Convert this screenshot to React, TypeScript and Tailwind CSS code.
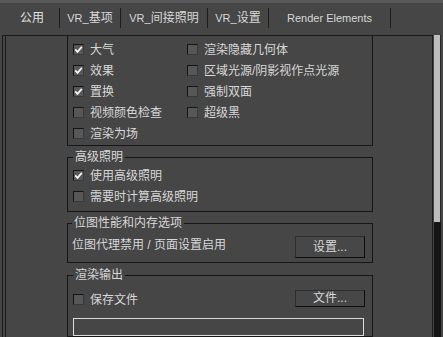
import type { ReactNode } from "react";

const Check = ({ on }: { on?: boolean }) => (
  <span className="flex h-[11px] w-[11px] shrink-0 items-center justify-center border border-t-[#141414] border-l-[#141414] border-r-[#3a3a3a] border-b-[#3a3a3a] bg-[#575757]">
    {on && (
      <svg width="9" height="9" viewBox="0 0 9 9">
        <path d="M1.2 4.3 L3.5 6.8 L7.8 1.8" stroke="#f4f4f4" strokeWidth="1.8" fill="none" />
      </svg>
    )}
  </span>
);

const Option = ({ on, children }: { on?: boolean; children: ReactNode }) => (
  <label className="flex h-[21px] items-center gap-[6px]">
    <Check on={on} />
    <span>{children}</span>
  </label>
);

const Button = ({ children, h }: { children: ReactNode; h: string }) => (
  <button
    className={`flex w-[70px] items-center justify-center border border-t-[#2e2e2e] border-l-[#2e2e2e] border-r-[#0c0c0c] border-b-[#0c0c0c] bg-[#474747] text-[#d8d8d8] ${h}`}
  >
    {children}
  </button>
);

// group box: border with its title sitting on the top edge
const Group = ({ title, className, children }: { title: string; className: string; children: ReactNode }) => (
  <div className={`border border-[#161616] ${className}`}>
    <div className="-mt-[9px] h-[16px]">
      <span className="bg-[#464646] px-[2px]">{title}</span>
    </div>
    {children}
  </div>
);

const tabs = [
  { pre: "VR_", label: "基项", w: "w-[61px]" },
  { pre: "VR_", label: "间接照明", w: "w-[87px]" },
  { pre: "VR_", label: "设置", w: "w-[61px]" },
  { pre: "Render Elements", label: "", w: "w-[123px]" },
];

export default function App() {
  return (
    <div className="h-[337px] w-[443px] overflow-hidden bg-[#464646] font-['Liberation_Sans','Noto_Sans_CJK_SC',sans-serif] text-[12px] leading-[16px] text-[#d8d8d8]">
      <div className="h-[3px] bg-[#585858]" />

      {/* tabs */}
      <div className="flex h-[32px] items-start pl-[5px] pt-[5px]">
        <div className="flex h-[20px] w-[54px] items-center justify-center text-[#e2e2e2]">公用</div>
        {tabs.map((t, i) => (
          <div
            key={t.pre + t.label}
            className={`flex h-[20px] items-center justify-center border-l border-[#1c1c1c] ${t.w} ${
              i === tabs.length - 1 ? "border-r" : ""
            }`}
          >
            <span className="text-[11px]">{t.pre}</span>
            {t.label}
          </div>
        ))}
      </div>

      <div className="flex h-[302px]">
        <div className="ml-[2px] flex w-[431px] border-l border-r border-t border-[#1a1a1a]">
          <div className="ml-[2px] w-[62px] border-l border-[#1a1a1a]" />

          <div className="flex w-[306px] flex-col">
            {/* options */}
            <div className="flex h-[115px] border-b border-l border-r border-[#161616] pl-[5px] pt-[3px]">
              <div className="flex w-[114px] flex-col">
                <Option on>大气</Option>
                <Option on>效果</Option>
                <Option on>置换</Option>
                <Option>视频颜色检查</Option>
                <Option>渲染为场</Option>
              </div>
              <div className="flex flex-col">
                <Option>渲染隐藏几何体</Option>
                <Option>区域光源/阴影视作点光源</Option>
                <Option>强制双面</Option>
                <Option>超级黑</Option>
              </div>
            </div>

            <Group title="高级照明" className="mt-[11px] px-[5px] pb-[4px]">
              <Option on>使用高级照明</Option>
              <Option>需要时计算高级照明</Option>
            </Group>

            <Group title="位图性能和内存选项" className="mt-[11px] pb-[4px] pl-[4px] pr-[7px]">
              <div className="flex items-start justify-between pt-[5px]">
                <span className="mt-[1px]">位图代理禁用 / 页面设置启用</span>
                <Button h="h-[22px]">设置...</Button>
              </div>
            </Group>

            <Group title="渲染输出" className="mt-[12px] flex-1 pl-[5px] pr-[7px]">
              <div className="flex items-center justify-between pt-[3px]">
                <div className="mt-[3px]">
                  <Option>保存文件</Option>
                </div>
                <Button h="h-[17px]">文件...</Button>
              </div>
              <div className="mt-[8px] h-[18px] w-[291px] border border-[#dcdcdc]" />
            </Group>
          </div>
        </div>

        {/* scrollbar */}
        <div className="flex w-[10px] flex-col pl-[1px]">
          <div className="h-[187px] w-[7px] border-r border-[#2a2a2a] bg-[#bcbcbc]" />
          <div className="w-[7px] flex-1 bg-[#151515]" />
        </div>
      </div>
    </div>
  );
}
